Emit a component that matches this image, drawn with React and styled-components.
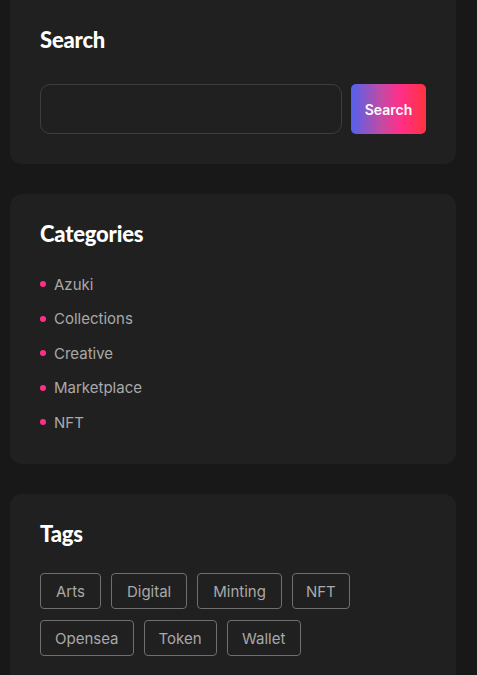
import React from 'react';
import styled, { createGlobalStyle } from 'styled-components';

const GlobalStyle = createGlobalStyle`
  body {
    margin: 0;
    background: #181818;
    font-family: Inter, "Liberation Sans", sans-serif;
  }
`;

const Sidebar = styled.aside`
  width: 446px;
  margin-left: 10px;
  display: flex;
  flex-direction: column;
  gap: 30px;
`;

const Widget = styled.section`
  background: #202020;
  border-radius: ${(p) => (p.$flatTop ? '0 0 12px 12px' : '12px')};
  padding: 27px 30px 30px;
`;

const Title = styled.h3`
  margin: 0 0 ${(p) => p.$space || 27}px;
  font-family: Lato, Inter, sans-serif;
  font-weight: 900;
  font-size: 22px;
  line-height: 26px;
  color: #ffffff;
  letter-spacing: -0.2px;
`;

const SearchRow = styled.form`
  display: flex;
  gap: 9px;
  height: 50px;
`;

const SearchInput = styled.input`
  flex: 1;
  min-width: 0;
  box-sizing: border-box;
  background: transparent;
  border: 1px solid #3d3d3d;
  border-radius: 10px;
  color: #ddd;
  padding: 0 16px;
  font-size: 15px;
  outline: none;
`;

const SearchButton = styled.button`
  width: 75px;
  border: 0;
  border-radius: 5px;
  background: linear-gradient(90deg, #5361ee 0%, #c14ba4 40%, #ff2f8a 65%, #ff3340 100%);
  color: #fff;
  font-family: Inter, sans-serif;
  font-weight: 600;
  font-size: 14px;
  cursor: pointer;
`;

const CategoryList = styled.ul`
  list-style: none;
  margin: 0 0 2px;
  padding: 0;
  display: flex;
  flex-direction: column;
  gap: 14.5px;
`;

const CategoryItem = styled.li`
  display: flex;
  align-items: center;
  gap: 8px;
  height: 20px;
  font-size: 15px;
  color: #a9a9a9;

  &::before {
    content: '';
    width: 6px;
    height: 6px;
    border-radius: 50%;
    background: #ff2e8a;
  }
`;

const TagCloud = styled.div`
  display: flex;
  flex-wrap: wrap;
  gap: 11px 10px;
`;

const Tag = styled.a`
  box-sizing: border-box;
  height: 36px;
  padding: 0 ${(p) => p.$pad}px;
  display: flex;
  align-items: center;
  border: 1px solid #6f6f6f;
  border-radius: 4px;
  font-size: 15px;
  color: #a9a9a9;
  text-decoration: none;
`;

const categories = ['Azuki', 'Collections', 'Creative', 'Marketplace', 'NFT'];
const tags = [
  ['Arts', 15],
  ['Digital', 15],
  ['Minting', 15],
  ['NFT', 13],
  ['Opensea', 14],
  ['Token', 14],
  ['Wallet', 14.5],
];

export default function App() {
  return (
    <>
      <GlobalStyle />
      <Sidebar>
        <Widget $flatTop>
          <Title $space={31}>Search</Title>
          <SearchRow onSubmit={(e) => e.preventDefault()}>
            <SearchInput type="text" />
            <SearchButton type="submit">Search</SearchButton>
          </SearchRow>
        </Widget>

        <Widget>
          <Title>Categories</Title>
          <CategoryList>
            {categories.map((c) => (
              <CategoryItem key={c}>{c}</CategoryItem>
            ))}
          </CategoryList>
        </Widget>

        <Widget>
          <Title $space={26}>Tags</Title>
          <TagCloud>
            {tags.map(([t, pad]) => (
              <Tag key={t} href="#" $pad={pad}>
                {t}
              </Tag>
            ))}
          </TagCloud>
        </Widget>
      </Sidebar>
    </>
  );
}
